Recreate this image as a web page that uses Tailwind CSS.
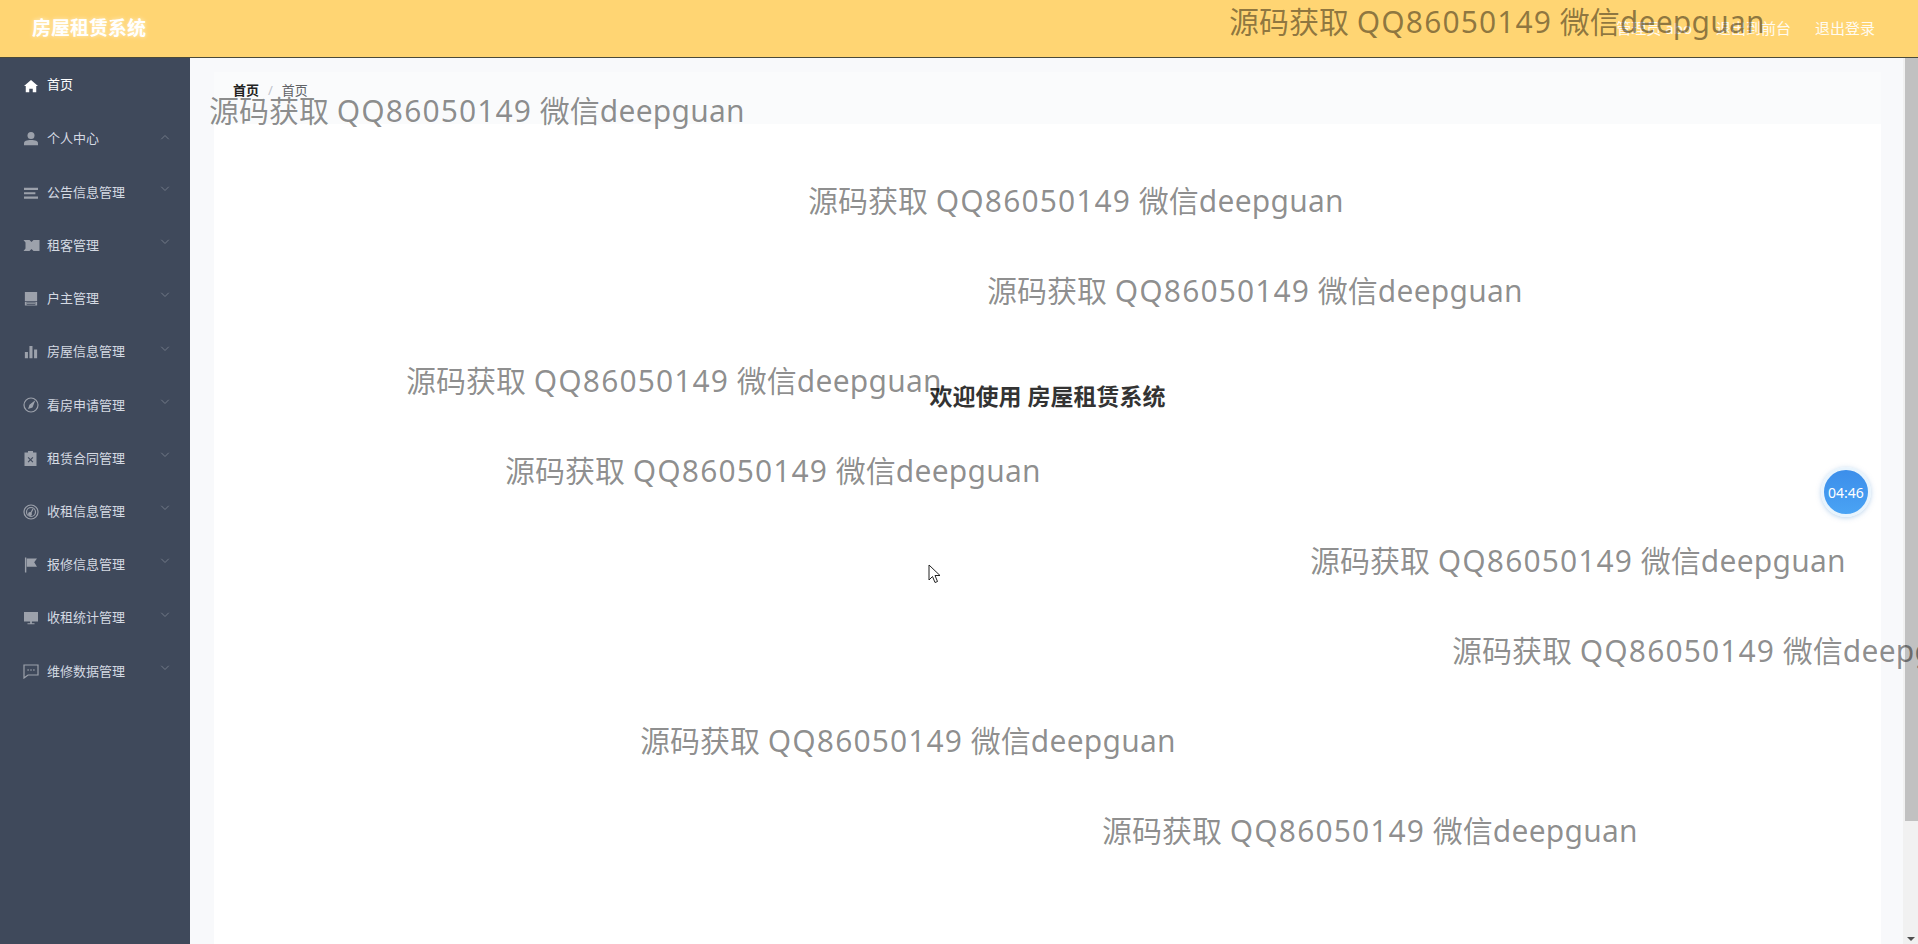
<!DOCTYPE html>
<html lang="zh">
<head>
<meta charset="utf-8">
<title>房屋租赁系统</title>
<script src="https://cdn.jsdelivr.net/npm/@tailwindcss/browser@4"></script>
</head>
<body class="h-[944px] w-[1918px] overflow-hidden bg-[#f8f9fb] font-['Noto_Sans','Noto_Sans_CJK_SC',sans-serif]">
<div class="relative flex h-[944px] flex-col">
  <header class="flex h-[58px] shrink-0 items-center justify-between border-b border-[#4a4a3a] bg-[#ffd573] pl-8 pr-[43px] text-white">
    <div class="text-[19px] font-bold [text-shadow:0_0_4px_rgba(255,255,255,0.6)]">房屋租赁系统</div>
    <div class="flex items-center gap-[24px] text-[15px] text-white/90">
      <span>管理员 abo</span><span>退出到前台</span><span>退出登录</span>
    </div>
  </header>
  <div class="flex min-h-0 flex-1">
    <nav class="w-[190px] shrink-0 bg-[#3f495b] text-[13px] text-[#d5dae3]">
      <a class="flex h-[53px] items-center gap-[9px] pl-[24px] text-white"><svg viewBox="0 0 16 16" class="mt-[2px] h-[14px] w-[14px]" fill="#fff"><path d="M8 1 0 8h2v7h4v-4h4v4h4V8h2z"/></svg>首页</a>
      <a class="relative flex h-[55px] items-center gap-[9px] pl-[24px]"><svg viewBox="0 0 16 16" class="h-[14px] w-[14px]" fill="#9ca1ab"><circle cx="8" cy="4" r="4"/><path d="M0 15v-2c0-3 3-4 8-4s8 1 8 4v2z"/></svg>个人中心<svg viewBox="0 0 12 8" class="absolute top-[23px] left-[160px] h-[6px] w-[10px]" fill="none" stroke="#79808d" stroke-width="1.2"><path d="M1 7l5-5 5 5"/></svg></a>
      <a class="relative flex h-[53.2px] items-center gap-[9px] pl-[24px]"><svg viewBox="0 0 16 16" class="h-[14px] w-[14px]" fill="#9ca1ab"><path d="M0 2h16v2.500H0zM0 7h13v2.500H0zM0 12h16v2.500H0z"/></svg>公告信息管理<svg viewBox="0 0 12 8" class="absolute top-[20px] left-[160px] h-[6px] w-[10px]" fill="none" stroke="#79808d" stroke-width="1.2"><path d="M1 1l5 5 5-5"/></svg></a>
      <a class="relative flex h-[53.2px] items-center gap-[7px] pl-[23px]"><svg viewBox="0 0 16 11" class="h-[11px] w-[17px]" fill="#9ca1ab"><path d="M0 0h6l2 2 2-2h6v11h-6l-2-2-2 2H0l2-2.500v-6z"/></svg>租客管理<svg viewBox="0 0 12 8" class="absolute top-[20px] left-[160px] h-[6px] w-[10px]" fill="none" stroke="#79808d" stroke-width="1.2"><path d="M1 1l5 5 5-5"/></svg></a>
      <a class="relative flex h-[53.2px] items-center gap-[9px] pl-[24px]"><svg viewBox="0 0 16 16" class="h-[14px] w-[14px]" fill="#9ca1ab"><path d="M1 0h14v10.500H1zM3 12h10v1.500H3z"/><path d="M1 11.500h2v3h10v-3h2v4H1z"/></svg>户主管理<svg viewBox="0 0 12 8" class="absolute top-[20px] left-[160px] h-[6px] w-[10px]" fill="none" stroke="#79808d" stroke-width="1.2"><path d="M1 1l5 5 5-5"/></svg></a>
      <a class="relative flex h-[53.2px] items-center gap-[9px] pl-[24px]"><svg viewBox="0 0 16 16" class="h-[14px] w-[14px]" fill="#9ca1ab"><path d="M1 8h3.500v7H1zM6.200 1h3.500v14H6.200zM11.500 5H15v10h-3.500z"/></svg>房屋信息管理<svg viewBox="0 0 12 8" class="absolute top-[20px] left-[160px] h-[6px] w-[10px]" fill="none" stroke="#79808d" stroke-width="1.2"><path d="M1 1l5 5 5-5"/></svg></a>
      <a class="relative flex h-[53.2px] items-center gap-[8px] pl-[23px]"><svg viewBox="0 0 16 16" class="h-[16px] w-[16px]" fill="none" stroke="#9ca1ab" stroke-width="1.200"><circle cx="8" cy="8" r="7"/><path d="M11 5 7 8l-1 3 3-1z" fill="#9ca1ab"/></svg>看房申请管理<svg viewBox="0 0 12 8" class="absolute top-[20px] left-[160px] h-[6px] w-[10px]" fill="none" stroke="#79808d" stroke-width="1.2"><path d="M1 1l5 5 5-5"/></svg></a>
      <a class="relative flex h-[53.2px] items-center gap-[10px] pl-[24px]"><svg viewBox="0 0 12 15" class="h-[15px] w-[13px]" fill="#9ca1ab"><path fill-rule="evenodd" d="M0 1.500h3.500V0h5v1.500H12V15H0zM4 6l2 2 2-2 .8.800-2 2 2 2-.8.800-2-2-2 2-.8-.8 2-2-2-2z"/></svg>租赁合同管理<svg viewBox="0 0 12 8" class="absolute top-[20px] left-[160px] h-[6px] w-[10px]" fill="none" stroke="#79808d" stroke-width="1.2"><path d="M1 1l5 5 5-5"/></svg></a>
      <a class="relative flex h-[53.2px] items-center gap-[8px] pl-[23px]"><svg viewBox="0 0 16 16" class="h-[16px] w-[16px]" fill="none" stroke="#9ca1ab" stroke-width="1.200"><circle cx="8" cy="8" r="7"/><circle cx="8" cy="8" r="4.500"/><circle cx="7" cy="10" r="1.300" fill="#9ca1ab"/><path d="M7.500 9.500 10 5"/></svg>收租信息管理<svg viewBox="0 0 12 8" class="absolute top-[20px] left-[160px] h-[6px] w-[10px]" fill="none" stroke="#79808d" stroke-width="1.2"><path d="M1 1l5 5 5-5"/></svg></a>
      <a class="relative flex h-[53.2px] items-center gap-[10px] pl-[24px]"><svg viewBox="0 0 14 16" class="h-[16px] w-[13px]" fill="#9ca1ab"><path d="M1 0h1.500v16H1zM3 1h11l-3 4 3 5H3z"/></svg>报修信息管理<svg viewBox="0 0 12 8" class="absolute top-[20px] left-[160px] h-[6px] w-[10px]" fill="none" stroke="#79808d" stroke-width="1.2"><path d="M1 1l5 5 5-5"/></svg></a>
      <a class="relative flex h-[53.2px] items-center gap-[9px] pl-[24px]"><svg viewBox="0 0 16 16" class="h-[14px] w-[14px]" fill="#9ca1ab"><path d="M0 1h16v11H0zM7 12h2v2h3v1H4v-1h3z"/></svg>收租统计管理<svg viewBox="0 0 12 8" class="absolute top-[20px] left-[160px] h-[6px] w-[10px]" fill="none" stroke="#79808d" stroke-width="1.2"><path d="M1 1l5 5 5-5"/></svg></a>
      <a class="relative flex h-[53.2px] items-center gap-[8px] pl-[23px]"><svg viewBox="0 0 16 16" class="h-[16px] w-[16px]" fill="none" stroke="#9ca1ab" stroke-width="1.200"><path d="M1 2h14v10H5l-4 3z"/><path d="M4.500 7h1.200M7.400 7h1.200M10.300 7h1.200" stroke-width="1.400"/></svg>维修数据管理<svg viewBox="0 0 12 8" class="absolute top-[20px] left-[160px] h-[6px] w-[10px]" fill="none" stroke="#79808d" stroke-width="1.2"><path d="M1 1l5 5 5-5"/></svg></a>
    </nav>
    <main class="flex min-w-0 flex-1 flex-col pl-[24px] pr-[22px] pt-[14px]">
      <div class="flex h-[52px] shrink-0 items-center gap-[9px] bg-[#fafbfc] pb-[14px] pl-[19px] text-[13px]">
        <span class="font-bold text-[#222]">首页</span><span class="text-[#c0c4cc]">/</span><span class="text-[#606266]">首页</span>
      </div>
      <section class="flex flex-1 justify-center bg-white pt-[256px]">
        <h1 class="text-[23px] leading-[32px] font-bold text-[#333]">欢迎使用 房屋租赁系统</h1>
      </section>
    </main>
    <div class="relative w-[15px] shrink-0 bg-[#f1f1f1]">
      <div class="ml-[2px] h-[763px] bg-[#c1c1c1]"></div>
      <div class="absolute bottom-[3px] left-[4px] h-0 w-0 border-x-[4px] border-t-[4px] border-x-transparent border-t-[#505050]"></div>
    </div>
  </div>

  <div class="absolute top-[467px] left-[1821px] flex h-[50px] w-[50px] items-center justify-center overflow-hidden rounded-full border-[3px] border-[#e8f4fd] bg-gradient-to-b from-[#3c8eea] to-[#4aa3f4] text-[14px] text-white shadow-[0_1px_5px_rgba(120,170,220,0.5)]">04:46</div>

  <svg viewBox="0 0 13 20" class="absolute top-[564px] left-[928px] h-[20px] w-[13px]" fill="#fff" stroke="#222" stroke-width="1"><path d="M1 1v15l3.500-3.500 2.500 6 2.500-1-2.500-6h5z"/></svg>

  <div class="pointer-events-none text-[30px] leading-[40px] text-black/45">
    <span class="absolute top-[2px] left-[1229px] whitespace-nowrap">源码获取 <span class="tracking-[1.1px]">QQ86050149</span> 微信<span class="tracking-[0.25px]">deepguan</span></span>
    <span class="absolute top-[91px] left-[209px] whitespace-nowrap">源码获取 <span class="tracking-[1.1px]">QQ86050149</span> 微信<span class="tracking-[0.25px]">deepguan</span></span>
    <span class="absolute top-[181px] left-[808px] whitespace-nowrap">源码获取 <span class="tracking-[1.1px]">QQ86050149</span> 微信<span class="tracking-[0.25px]">deepguan</span></span>
    <span class="absolute top-[271px] left-[987px] whitespace-nowrap">源码获取 <span class="tracking-[1.1px]">QQ86050149</span> 微信<span class="tracking-[0.25px]">deepguan</span></span>
    <span class="absolute top-[361px] left-[406px] whitespace-nowrap">源码获取 <span class="tracking-[1.1px]">QQ86050149</span> 微信<span class="tracking-[0.25px]">deepguan</span></span>
    <span class="absolute top-[451px] left-[505px] whitespace-nowrap">源码获取 <span class="tracking-[1.1px]">QQ86050149</span> 微信<span class="tracking-[0.25px]">deepguan</span></span>
    <span class="absolute top-[541px] left-[1310px] whitespace-nowrap">源码获取 <span class="tracking-[1.1px]">QQ86050149</span> 微信<span class="tracking-[0.25px]">deepguan</span></span>
    <span class="absolute top-[631px] left-[1452px] whitespace-nowrap">源码获取 <span class="tracking-[1.1px]">QQ86050149</span> 微信<span class="tracking-[0.25px]">deepguan</span></span>
    <span class="absolute top-[721px] left-[640px] whitespace-nowrap">源码获取 <span class="tracking-[1.1px]">QQ86050149</span> 微信<span class="tracking-[0.25px]">deepguan</span></span>
    <span class="absolute top-[811px] left-[1102px] whitespace-nowrap">源码获取 <span class="tracking-[1.1px]">QQ86050149</span> 微信<span class="tracking-[0.25px]">deepguan</span></span>
  </div>
</div>
</body>
</html>
